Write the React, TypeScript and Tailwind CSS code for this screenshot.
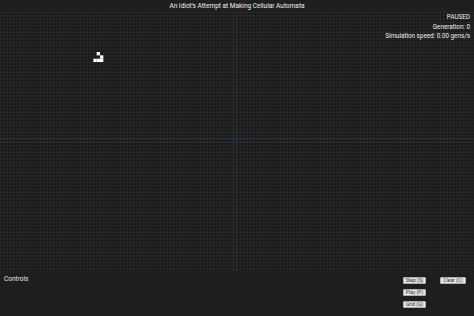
import { useState } from 'react';

const CELL = 10 / 3;
const GLIDER: [number, number][] = [
  [29, 12],
  [30, 13],
  [28, 14],
  [29, 14],
  [30, 14],
];

function GridCanvas() {
  return (
    <svg className="absolute inset-0 h-full w-full" width="474" height="259">
      <defs>
        <pattern id="cells" width={CELL} height={CELL} patternUnits="userSpaceOnUse">
          <path d={`M ${CELL} 0 L 0 0 0 ${CELL}`} fill="none" stroke="#363636" strokeWidth="0.8" />
        </pattern>
      </defs>
      <rect width="474" height="259" fill="#1a1a1a" />
      <rect width="474" height="259" fill="url(#cells)" />
      {/* axes */}
      <line x1={70 * CELL} y1="0" x2={70 * CELL} y2="259" stroke="#243a46" strokeWidth="0.8" />
      <line x1={71 * CELL} y1="0" x2={71 * CELL} y2="259" stroke="#2c3448" strokeWidth="0.8" />
      <line x1="0" y1={38 * CELL} x2="474" y2={38 * CELL} stroke="#243a46" strokeWidth="0.8" />
      <line x1="0" y1={39 * CELL} x2="474" y2={39 * CELL} stroke="#2c3448" strokeWidth="0.8" />
      {GLIDER.map(([cx, cy]) => (
        <rect key={`${cx}-${cy}`} x={cx * CELL} y={cy * CELL} width={CELL} height={CELL} fill="#ffffff" />
      ))}
    </svg>
  );
}

function SmallButton({ label, wide }: { label: string; wide?: boolean }) {
  return (
    <button
      type="button"
      className={`flex h-[7px] items-center justify-center whitespace-nowrap rounded-[1px] border-[0.5px] border-[#b0b0b0] bg-[#e4e4e4] text-[5px] leading-none text-[#333] ${
        wide ? 'w-[26px]' : 'w-[23px]'
      }`}
    >
      {label}
    </button>
  );
}

export default function App() {
  const [generation] = useState(0);

  return (
    <div
      className="flex h-[316px] w-[474px] flex-col overflow-hidden bg-[#1e1e1e] text-white"
      style={{ fontFamily: 'Roboto, "Liberation Sans", sans-serif' }}
    >
      <header className="flex h-[12px] items-center justify-center bg-[#1f1f1f] text-[6.5px] leading-none text-[#f0f0f0]">
        An Idiot&apos;s Attempt at Making Cellular Automata
      </header>

      <main className="relative h-[259px]">
        <GridCanvas />
        <div className="absolute right-[4px] top-[2px] flex flex-col items-end gap-[2.6px] text-[6.3px] leading-[7px] text-[#f0f0f0]">
          <span>PAUSED</span>
          <span>Generation: {generation}</span>
          <span>Simulation speed: 0.00 gens/s</span>
        </div>
      </main>

      <footer className="flex flex-1 justify-between bg-[#1e1e1e] pl-[4px] pr-[8px] pt-[5px]">
        <span className="text-[6.5px] leading-none text-[#e6e6e6]">Controls</span>
        <div className="flex gap-[14px] pt-[1px]">
          <div className="flex flex-col gap-[5px]">
            <SmallButton label="Step (S)" />
            <SmallButton label="Play (P)" />
            <SmallButton label="Grid (G)" />
          </div>
          <div className="flex flex-col">
            <SmallButton label="Clear (C)" wide />
          </div>
        </div>
      </footer>
    </div>
  );
}
